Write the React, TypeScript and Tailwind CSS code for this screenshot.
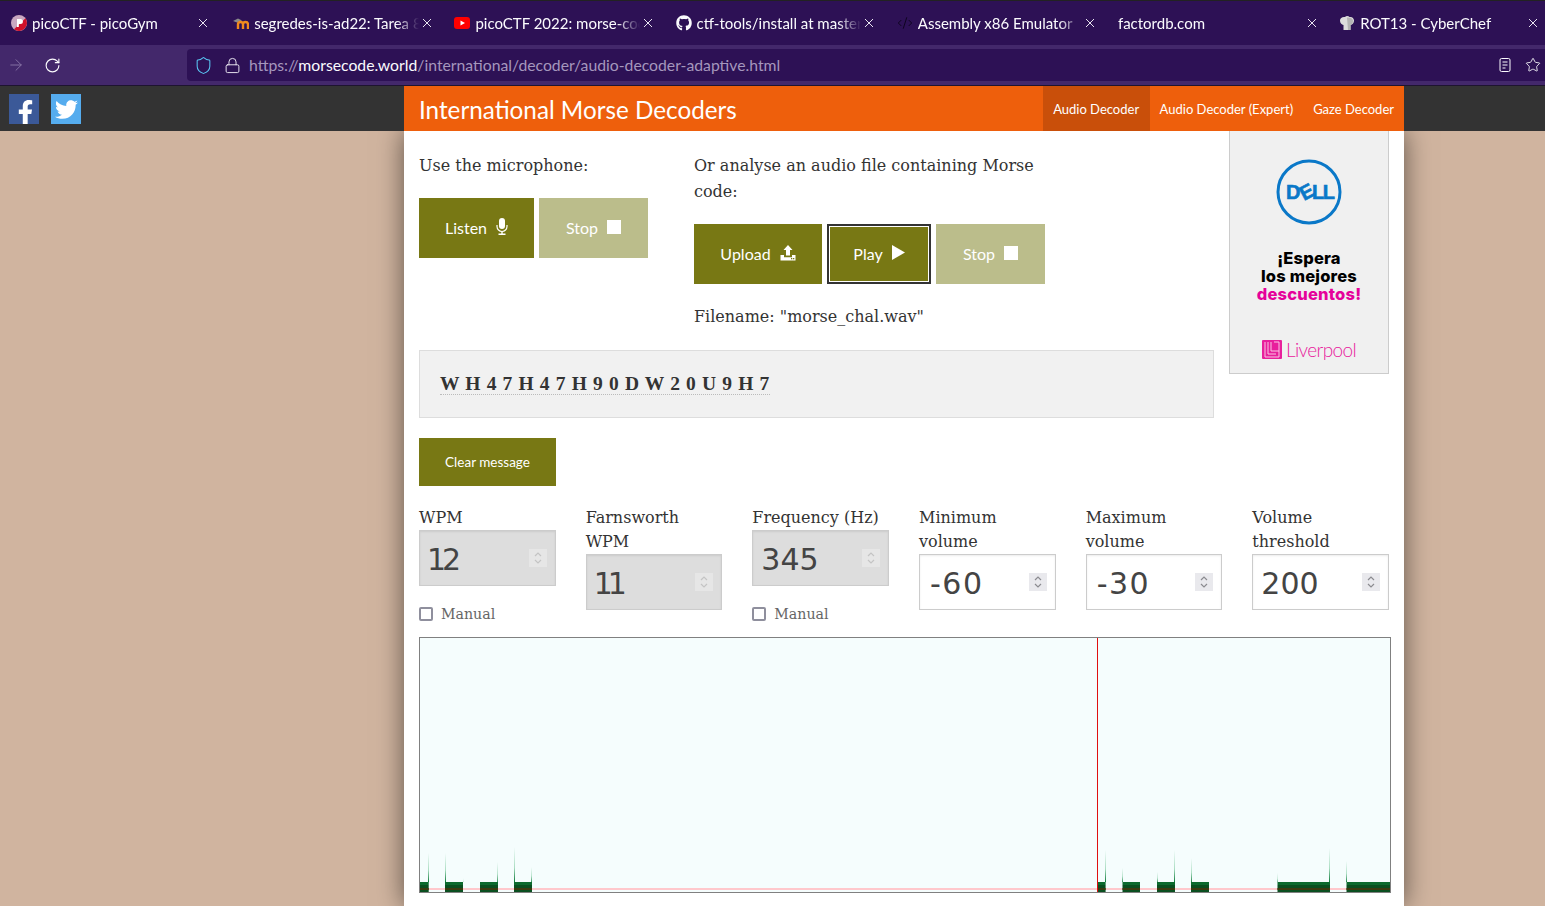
import React from "react";
import { FaFacebookF, FaTwitter, FaGithub } from "react-icons/fa";
import { Code2, Lock, RotateCw, ArrowRight, Star, Shield } from "lucide-react";

const ui = "font-['Lato','Noto_Sans',sans-serif]";
const serif = "font-['DejaVu_Serif',serif]";

function CloseX() {
  return (
    <svg width="10" height="10" viewBox="0 0 10 10" className="shrink-0 text-[#e8e4f0]">
      <path d="M1 1 9 9M9 1 1 9" stroke="currentColor" strokeWidth="1" fill="none" />
    </svg>
  );
}

function Pico() {
  return (
    <svg width="16" height="16" viewBox="0 0 16 16">
      <circle cx="8" cy="8" r="8" fill="#c9a7c0" />
      <path d="M14.5 3.3A8 8 0 0 1 3 14.2Z" fill="#d0102a" />
      <path d="M6 12V4h3.4a2.5 2.5 0 0 1 0 5H7.8v3Z" fill="#fff" />
    </svg>
  );
}
function Moodle() {
  return (
    <svg width="16" height="16" viewBox="0 0 16 16">
      <path d="M0 6 5 3.500 9 5.500 4 7.500Z" fill="#8a8a8a" />
      <path d="M5 14V9M5 9.500a2.500 2.500 0 0 1 5 0V14M10 9.500a2.500 2.500 0 0 1 5 0V14" stroke="#f08a1d" strokeWidth="2.400" fill="none" />
    </svg>
  );
}
function Youtube() {
  return (
    <svg width="16" height="16" viewBox="0 0 16 16">
      <rect x="0" y="2" width="16" height="12" rx="3" fill="#f00" />
      <path d="M6.500 5.500 11 8l-4.500 2.500Z" fill="#fff" />
    </svg>
  );
}
function Chef() {
  return (
    <svg width="16" height="16" viewBox="0 0 16 16">
      <path d="M4.500 10C2.500 9.500 1 8 1 5.500 1 3 3.500 1.500 6 2 7 .5 9.500 .5 10.500 2 13 1.500 15 3.300 15 5.500c0 2.500-1.500 4-3.500 4.500v5h-7Z" fill="#dcdcdc" />
      <path d="M8 2.500c3 0 6 .5 6 3.500S11.500 10 11.500 10v5H9Z" fill="#b4b4b4" />
    </svg>
  );
}

const tabs: { icon: React.ReactNode; title: string }[] = [
  { icon: <Pico />, title: "picoCTF - picoGym" },
  { icon: <Moodle />, title: "segredes-is-ad22: Tarea 8" },
  { icon: <Youtube />, title: "picoCTF 2022: morse-code" },
  { icon: <FaGithub size={16} color="#fbfbfe" />, title: "ctf-tools/install at master" },
  { icon: <Code2 size={16} color="#0e0420" strokeWidth={1.5} />, title: "Assembly x86 Emulator" },
  { icon: null, title: "factordb.com" },
  { icon: <Chef />, title: "ROT13 - CyberChef" },
];

function Tab({ icon, title, first }: { icon: React.ReactNode; title: string; first: boolean }) {
  return (
    <div className={`flex h-full w-[221.2px] shrink-0 items-center ${first ? "pl-[11px] pr-[13px]" : "pl-[12px] pr-[10.5px]"}`}>
      {icon ? <span className="mr-[5px] flex h-4 w-4 shrink-0 items-center justify-center">{icon}</span> : null}
      <span className="min-w-0 flex-1 overflow-hidden whitespace-nowrap pt-px text-[15px] text-[#fbfbfe] [mask-image:linear-gradient(to_right,black_86%,transparent)]">
        {title}
      </span>
      <span className="ml-[3px] flex w-[10px] shrink-0 justify-center"><CloseX /></span>
    </div>
  );
}

function Mic() {
  return (
    <svg width="12" height="17" viewBox="0 0 12 17">
      <rect x="3" y="0" width="6" height="11" rx="3" fill="#fff" />
      <path d="M1 7v1.500a5 5 0 0 0 10 0V7" stroke="#fff" strokeWidth="1.200" fill="none" />
      <path d="M6 13.500V16M2.500 16.200h7" stroke="#fff" strokeWidth="1.400" fill="none" />
    </svg>
  );
}
function UploadIcon() {
  return (
    <svg width="16" height="16" viewBox="0 0 16 16">
      <path d="M8 0 12.500 5H10v5.500H6V5H3.500Z" fill="#fff" />
      <path d="M0.500 10h3.500v2.200h8V10h3.500v5.500h-15Z" fill="#fff" />
      <rect x="11" y="13" width="1.300" height="1.300" fill="#787814" />
      <rect x="13" y="13" width="1.300" height="1.300" fill="#787814" />
    </svg>
  );
}
function PlayIcon() {
  return (
    <svg width="13" height="15" viewBox="0 0 13 15"><path d="M0 0 13 7.500 0 15Z" fill="#fff" /></svg>
  );
}
function StopIcon() {
  return <span className="block h-[14px] w-[14px] bg-white" />;
}

function Btn({ label, icon, disabled, w, focus }: { label: string; icon: React.ReactNode; disabled?: boolean; w: string; focus?: boolean }) {
  return (
    <div className={`flex h-[60px] items-center justify-center gap-[9px] text-[16px] text-white ${ui} ${w} ${disabled ? "bg-[#bbbd8b]" : "bg-[#787814]"} ${focus ? "border-2 border-[#333] outline outline-1 -outline-offset-3 outline-white" : ""}`}>
      <span>{label}</span>
      <span className="-mt-[3px]">{icon}</span>
    </div>
  );
}

function Spinner({ disabled }: { disabled?: boolean }) {
  const c = disabled ? "#c4c4c4" : "#8b8b90";
  return (
    <span className={`absolute right-[9px] top-1/2 flex h-[18px] w-[18px] -translate-y-1/2 items-center justify-center ${disabled ? "bg-[#e6e6e6]" : "bg-[#e9e9ed]"}`}>
      <svg width="10" height="14" viewBox="0 0 10 14">
        <path d="M2 5 5 2l3 3M2 9l3 3 3-3" stroke={c} strokeWidth="1.200" fill="none" />
      </svg>
    </span>
  );
}

function Field({ label, value, disabled, manual, spacing = "pl-[8px]" }: { label: React.ReactNode; value: string; disabled?: boolean; manual?: boolean; spacing?: string }) {
  return (
    <div className="flex min-w-0 flex-col">
      <div className={`text-[16px] leading-[24px] text-[#333] ${serif}`}>{label}</div>
      <div className="relative h-[56px]">
        <input
          readOnly
          value={value}
          className={`h-full w-full border border-[#ccc] pt-[2px] text-[30px] text-[#444] shadow-[inset_0_1px_2px_rgba(0,0,0,0.08)] outline-none font-['DejaVu_Sans',sans-serif] ${spacing} ${disabled ? "bg-[#ddd] text-[#333]" : "bg-white"}`}
        />
        <Spinner disabled={disabled} />
      </div>
      {manual && (
        <label className={`mt-[18px] flex items-center gap-[8px] text-[14.2px] leading-[20px] text-[#666] ${serif}`}>
          <span className="block h-[14px] w-[14px] rounded-[2px] border-2 border-[#8f8f9d] bg-white" />
          Manual
        </label>
      )}
    </div>
  );
}

const bars = [
  [420, 8.7], [445, 18], [480, 18], [514, 18],
  [1097.6, 8], [1122.5, 17.5], [1157, 18], [1191, 18], [1277.5, 52.5], [1346.5, 43.5],
];
const spikes = [
  [428, 853, 1], [445, 853, 1], [463, 878, 0.2], [497, 862, 0.8], [514, 847, 1], [531, 867, 0.8],
  [1105, 850, 1], [1122, 868, 0.8], [1157, 872, 0.7], [1174, 850, 1], [1191, 858, 0.9], [1277, 873, 0.5], [1329, 848, 1], [1346, 861, 0.9],
];

function Spectrogram() {
  const ox = 419;
  const oy = 637;
  return (
    <svg width="972" height="256" viewBox="0 0 972 256" className="block">
      <defs>
        <linearGradient id="spike" x1="0" y1="0" x2="0" y2="1">
          <stop offset="0" stopColor="#f5fdfd" />
          <stop offset="0.6" stopColor="#a8dcc0" />
          <stop offset="1" stopColor="#0c7a38" />
        </linearGradient>
      </defs>
      <rect x="0" y="0" width="972" height="256" fill="#f5fdfd" />
      <rect x="1" y={888 - oy} width="970" height="2" fill="#ffc8cc" />
      {spikes.map(([x, y, o], i) => (
        <rect key={i} x={x - ox} y={y - oy} width="1" height={882 - y} fill="url(#spike)" opacity={o} />
      ))}
      {bars.map(([x, w], i) => (
        <g key={i}>
          <rect x={x - ox} y={882 - oy} width={w} height="3" fill="#0c6a2e" />
          <rect x={x - ox} y={885 - oy} width={w} height="7" fill="#0a4f20" />
          <rect x={x - ox} y={888 - oy} width={w} height="2" fill="#3d3a10" />
        </g>
      ))}
      <rect x={1097 - ox} y="0" width="1" height="255" fill="#e01010" />
      <rect x="0.500" y="0.500" width="971" height="255" fill="none" stroke="#808080" />
    </svg>
  );
}

function Ad() {
  return (
    <div className="flex h-[243px] w-[160px] shrink-0 flex-col items-center border-x border-b border-[#ccc] bg-[#f0f0f0]">
      <svg width="68" height="68" viewBox="0 0 68 68" className="mt-[27px]">
        <circle cx="34" cy="34" r="31" fill="none" stroke="#0a78c8" strokeWidth="3" />
        <g fontFamily="Liberation Sans" fontWeight="700" fontSize="20" fill="#0a78c8" stroke="#0a78c8" strokeWidth="0.600">
          <text x="11" y="41">D</text>
          <text x="25" y="41" transform="rotate(-28 31 34)">E</text>
          <text x="37" y="41" letterSpacing="-1.500">LL</text>
        </g>
      </svg>
      <div className="mt-[23px] text-center font-['Inter',sans-serif] text-[16.500px] font-extrabold leading-[18px] tracking-[0.200px] text-black">
        <div>¡Espera</div>
        <div>los mejores</div>
        <div className="text-[#e5019a]">descuentos!</div>
      </div>
      <div className="mt-[37px] flex items-center gap-[4px]">
        <svg width="20" height="20" viewBox="0 0 20 20">
          <rect x="0" y="0" width="20" height="19" rx="1" fill="#e8209c" />
          <path d="M3 2v15h14M6 2v12h8M9 2v9h8M12 2h5v15" stroke="#f9c6e4" strokeWidth="1" fill="none" />
        </svg>
        <span className="font-['Lato',sans-serif] text-[19px] font-light leading-[20px] tracking-[-0.600px] text-[#e8209c]">Liverpool</span>
      </div>
    </div>
  );
}

export default function App() {
  return (
    <div className="relative h-[906px] w-[1545px] overflow-hidden bg-[#d0b49f]">
      {/* browser chrome */}
      <div className={`bg-[#2d1155] ${ui}`}>
        <div className="h-px bg-[#222]" />
        <div className="flex h-[44px] items-center overflow-hidden">
          {tabs.map((t, i) => (
            <Tab key={i} icon={t.icon} title={t.title} first={i === 0} />
          ))}
        </div>
        <div className="flex h-[40px] items-center bg-[#43286b]">
          <div className="flex w-[187px] shrink-0 items-center pl-[7px]">
            <ArrowRight size={18} color="#8a76a8" strokeWidth={1.200} />
            <RotateCw size={17} color="#fbfbfe" strokeWidth={1.600} className="ml-[19px]" />
          </div>
          <div className="flex h-[32px] flex-1 items-center rounded-l-[4px] bg-[#2d1155] pl-[7px]">
            <Shield size={19} color="#5ac8f5" strokeWidth={1.300} />
            <Lock size={17} color="#e6e2ee" strokeWidth={1.400} className="ml-[11px]" />
            <span className="ml-[8px] flex-1 whitespace-nowrap text-[15.75px] text-[#a597bd]">
              https://<span className="text-[#fbfbfe]">morsecode.world</span>/international/decoder/audio-decoder-adaptive.html
            </span>
            <svg width="12" height="14" viewBox="0 0 12 14" className="mr-[14px]">
              <rect x="1" y="0.500" width="10" height="13" rx="1.500" fill="none" stroke="#fbfbfe" />
              <path d="M3.500 4h5M3.500 7h5M3.500 10h3" stroke="#fbfbfe" />
            </svg>
            <Star size={16} color="#fbfbfe" strokeWidth={1.300} className="mr-[4px]" />
          </div>
        </div>
        <div className="h-px bg-[#1e1430]" />
      </div>

      {/* site header */}
      <div className={`relative z-10 flex h-[45px] bg-[#333] ${ui}`}>
        <div className="flex w-[404px] shrink-0 gap-[12px] pl-[9px] pt-[8px]">
          <span className="flex h-[30px] w-[30px] items-end justify-center overflow-hidden bg-[#3b5998]">
            <FaFacebookF size={25} color="#fff" className="-mb-[1px] ml-[3px]" />
          </span>
          <span className="flex h-[30px] w-[30px] items-center justify-center bg-[#55acee]">
            <FaTwitter size={23} color="#fff" />
          </span>
        </div>
        <div className="flex w-[1000px] items-stretch bg-[#ee5f0c] pl-[15px] text-white">
          <div className="flex-1 self-center pt-[3px] text-[24.25px]">International Morse Decoders</div>
          <div className="flex items-center bg-[#c94f0a] px-[10.500px] pt-[2px] text-[13px]">Audio Decoder</div>
          <div className="flex items-center px-[10px] pt-[2px] text-[13px]">Audio Decoder (Expert)</div>
          <div className="flex items-center px-[10px] pt-[2px] text-[13px]">Gaze Decoder</div>
        </div>
      </div>

      {/* page */}
      <div className="flex">
        <div className="w-[404px] shrink-0" />
        <main className={`h-[775px] w-[1000px] shrink-0 bg-white px-[15px] shadow-[0_0_25px_rgba(0,0,0,0.55)] ${serif} text-[#333]`}>
          <div className="flex gap-[15px]">
            <div className="w-[795px] shrink-0 pt-[22px]">
              <div className="flex">
                <div className="w-[275px] shrink-0">
                  <p className="text-[16px] leading-[26px]">Use the microphone:</p>
                  <div className="mt-[19px] flex gap-[5px]">
                    <Btn label="Listen" icon={<Mic />} w="w-[115px]" />
                    <Btn label="Stop" icon={<StopIcon />} disabled w="w-[109px]" />
                  </div>
                </div>
                <div className="w-[360px]">
                  <p className="text-[16px] leading-[26px]">Or analyse an audio file containing Morse code:</p>
                  <div className="mt-[19px] flex gap-[5px]">
                    <Btn label="Upload" icon={<UploadIcon />} w="w-[128px]" />
                    <Btn label="Play" icon={<PlayIcon />} w="w-[104px]" focus />
                    <Btn label="Stop" icon={<StopIcon />} disabled w="w-[109px]" />
                  </div>
                  <p className="mt-[20px] text-[16px] leading-[26px]">Filename: "morse_chal.wav"</p>
                </div>
              </div>
              <div className="mt-[20px] flex h-[68px] items-center border border-[#ddd] bg-[#f1f1f1] pl-[20px]">
                <span className="border-b border-dotted border-[#bbb] font-['Liberation_Serif',serif] text-[19.5px] font-bold leading-[20px] tracking-[0.650px]">
                  W H 4 7 H 4 7 H 9 0 D W 2 0 U 9 H 7
                </span>
              </div>
              <div className={`mt-[20px] flex h-[48px] w-[137px] items-center justify-center bg-[#787814] text-[13.5px] text-white ${ui}`}>
                Clear message
              </div>
            </div>
            <Ad />
          </div>

          <div className="mt-[20px] grid grid-cols-6 items-start gap-x-[30px]">
            <Field label="WPM" value="12" disabled manual spacing="pl-[7px] tracking-[-4px]" />
            <Field label={<>Farnsworth<br />WPM</>} value="11" disabled spacing="pl-[7px] tracking-[-5px]" />
            <Field label="Frequency (Hz)" value="345" disabled manual />
            <Field label={<>Minimum<br />volume</>} value="-60" spacing="pl-[10px] tracking-[1.500px]" />
            <Field label={<>Maximum<br />volume</>} value="-30" spacing="pl-[10px] tracking-[1.500px]" />
            <Field label={<>Volume<br />threshold</>} value="200" />
          </div>

          <div className="mt-[13px]">
            <Spectrogram />
          </div>
        </main>
      </div>
    </div>
  );
}
